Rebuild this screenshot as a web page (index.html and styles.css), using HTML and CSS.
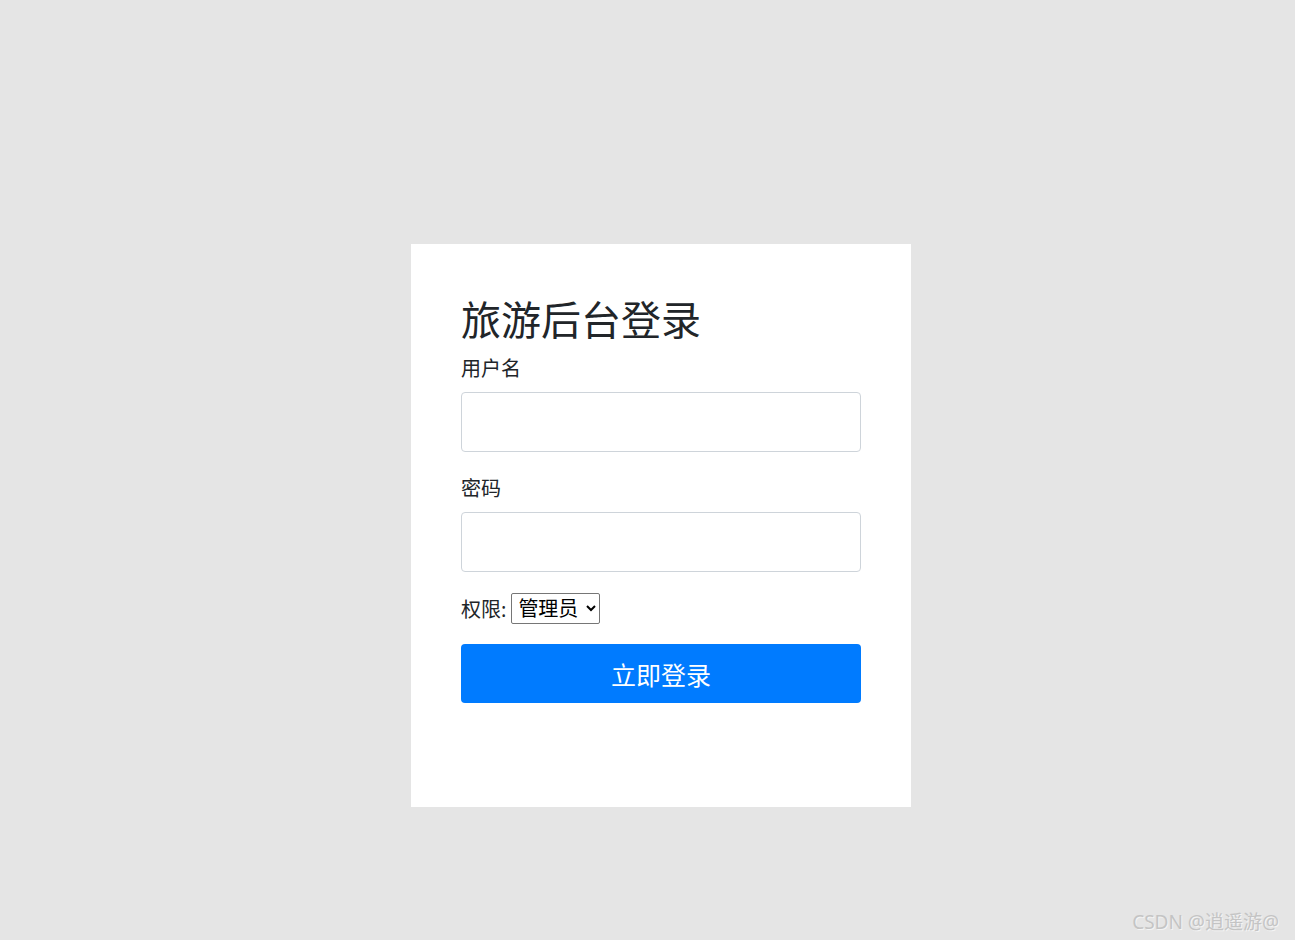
FILE: index.html
```html
<!DOCTYPE html>
<html lang="zh-CN">
<head>
    <meta charset="UTF-8">
    <meta name="viewport" content="width=device-width, initial-scale=1.0">
    <title>旅游后台登录</title>
    <link rel="stylesheet" href="styles.css">
</head>
<body>
    <div class="login-box">
        <h1>旅游后台登录</h1>
        <form class="login-form" onsubmit="return false">
            <div class="form-group">
                <label for="username">用户名</label>
                <input type="text" class="form-input" id="username">
            </div>
            <div class="form-group">
                <label for="password">密码</label>
                <input type="password" class="form-input" id="password">
            </div>
            <div class="role-row">
                <span>权限:</span>
                <select class="role-select" id="role">
                    <option value="admin">管理员</option>
                    <option value="user">用户</option>
                </select>
            </div>
            <button type="submit" class="login-btn">立即登录</button>
        </form>
    </div>
    <div class="watermark">CSDN @逍遥游@</div>
</body>
</html>
```

FILE: styles.css
```css
* {
    box-sizing: border-box;
}

body {
    margin: 0;
    min-height: 940px;
    background-color: #e5e5e5;
    font-family: "Microsoft YaHei", "Noto Sans", "Noto Sans CJK SC", sans-serif;
    color: #212529;
    position: relative;
}

.login-box {
    width: 500px;
    height: 563px;
    margin: 0 0 0 411px;
    position: relative;
    top: 244px;
    background-color: #fff;
    padding: 52px 50px 50px;
}

h1 {
    font-size: 40px;
    font-weight: 400;
    line-height: 48px;
    margin: 0 0 13px;
    color: #212529;
}

.form-group {
    display: flex;
    flex-direction: column;
    margin-bottom: 25px;
}

label {
    font-size: 20px;
    line-height: 24px;
    margin-bottom: 11px;
}

.form-input {
    width: 400px;
    height: 60px;
    border: 1px solid #ced4da;
    border-radius: 4px;
    padding: 6px 12px;
    font-size: 20px;
}

.role-row {
    display: flex;
    align-items: center;
    gap: 5px;
    font-size: 20px;
    margin-top: -4px;
    margin-bottom: 20px;
}

.role-select {
    width: 89px;
    height: 31px;
    font-size: 20px;
    font-family: inherit;
    color: #000;
    border: 1px solid #767676;
    border-radius: 2px;
    background: #fff;
    padding: 0 2px;
}

.login-btn {
    display: block;
    width: 400px;
    height: 59px;
    border: none;
    border-radius: 4px;
    background-color: #007bff;
    color: #fff;
    font-size: 25px;
    font-family: inherit;
    cursor: pointer;
}

.login-btn:hover {
    background-color: #0069d9;
}

.watermark {
    position: absolute;
    right: 16px;
    bottom: 5px;
    font-size: 19px;
    color: #c4c4c4;
    text-shadow: 1px 1px 0 #f4f4f4;
}
```
